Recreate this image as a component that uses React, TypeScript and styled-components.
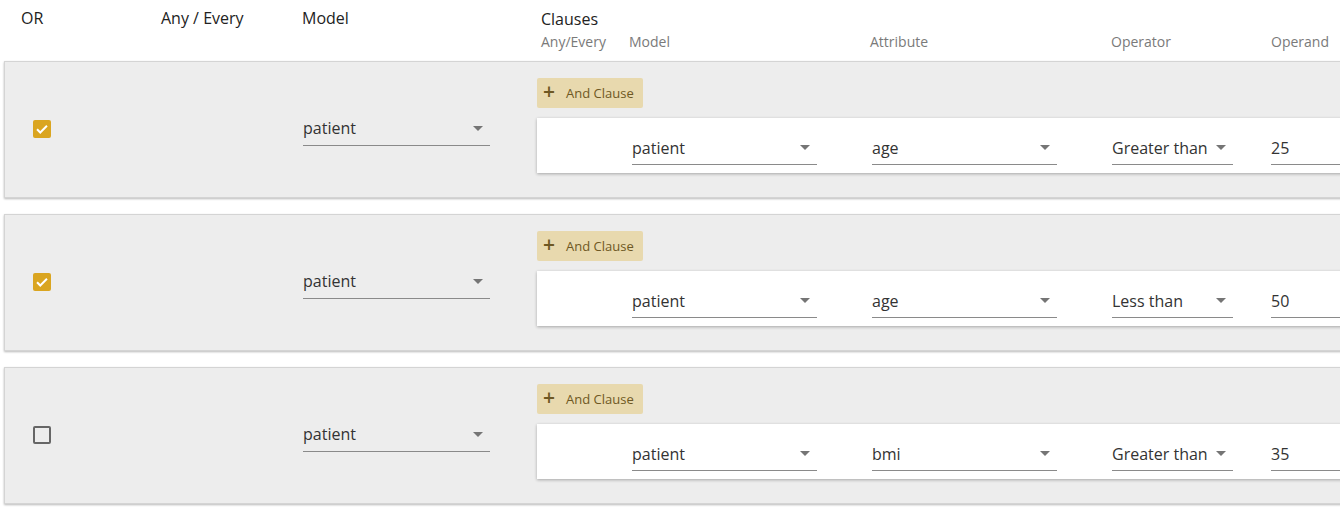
import styled, { createGlobalStyle } from 'styled-components'

const GlobalStyle = createGlobalStyle`
    body {
        margin: 0;
        font-family: "Open Sans", "Liberation Sans", sans-serif;
        background: #fff;
        overflow: hidden;
    }
`

const Page = styled.div`
    width: 1420px;
    padding: 0 4px;
`
const HeaderRow = styled.div`
    display: grid;
    grid-template-columns: 140px 141px 235px 1fr;
    padding: 7px 0 8px 17px;
    color: #222;
    font-size: 16px;
`
const HeaderCell = styled.div`
    line-height: 22px;
`
const ClausesHead = styled.div`
    padding-left: 4px;
    .title{
        line-height: 24px;
    }
`
const SubHeader = styled.div`
    display: grid;
    grid-template-columns: 88px 241px 241px 160px 1fr;
    font-size: 14px;
    line-height: 22px;
    color: #7a7a7a;
`
const Card = styled.div`
    display: grid;
    grid-template-columns: 140px 141px 235px 1fr;
    align-items: center;
    background: #ededed;
    border: 1px solid #d4d4d4;
    box-shadow: 0 1px 2px rgba(0, 0, 0, 0.28);
    padding: 16px 0 24px 16px;
    margin-bottom: 16px;
`
const Cell = styled.div<{ $indent?: number }>`
    padding-top: 7px;
    padding-left: ${props => props.$indent || 0}px;
`
const Checkbox = styled.div<{ $checked: boolean }>`
    width: 18px;
    height: 18px;
    margin-left: 12px;
    box-sizing: border-box;
    border-radius: 2px;
    display: flex;
    align-items: center;
    justify-content: center;
    background: ${props => props.$checked ? '#daa520' : 'transparent'};
    border: ${props => props.$checked ? 'none' : '2px solid #666'};
`
const Select = styled.div<{ $width: number }>`
    width: ${props => props.$width}px;
    height: 33px;
    box-sizing: border-box;
    display: flex;
    align-items: center;
    justify-content: space-between;
    border-bottom: 1px solid #8a8a8a;
    font-size: 16px;
    color: #333;
    padding-bottom: 1px;
`
const Arrow = styled.span`
    width: 0;
    height: 0;
    border-left: 5px solid transparent;
    border-right: 5px solid transparent;
    border-top: 5px solid #757575;
    margin-right: 7px;
`
const ClauseColumn = styled.div`
    display: flex;
    flex-direction: column;
    align-items: flex-start;
    gap: 10px;
`
const AddButton = styled.button`
    height: 30px;
    width: 106px;
    border: none;
    border-radius: 2px;
    background: #e8d9ae;
    color: #6e5823;
    font-family: inherit;
    font-size: 13px;
    display: flex;
    align-items: center;
    gap: 11px;
    padding: 0 6px;
    .plus{
        font-size: 21px;
        font-weight: 600;
        line-height: 1;
        margin-top: -3px;
    }
`
const ClauseCard = styled.div`
    align-self: stretch;
    display: grid;
    grid-template-columns: 95px 240px 240px 159px 1fr;
    background: #fff;
    box-shadow: 0 1px 3px rgba(0, 0, 0, 0.3);
    padding: 14px 0 8px 0;
`

const Check = () => (
    <svg width="14" height="14" viewBox="0 0 24 24">
        <path d="M3.5 12.5l5.5 5.5L20.5 6.5" fill="none" stroke="#fff" strokeWidth="3.4" />
    </svg>
)

const rows = [
    { checked: true, attribute: 'age', operator: 'Greater than', operand: '25' },
    { checked: true, attribute: 'age', operator: 'Less than', operand: '50' },
    { checked: false, attribute: 'bmi', operator: 'Greater than', operand: '35' },
]

const App = () => {
    return (
        <>
            <GlobalStyle />
            <Page>
                <HeaderRow>
                    <HeaderCell>OR</HeaderCell>
                    <HeaderCell>Any / Every</HeaderCell>
                    <HeaderCell>Model</HeaderCell>
                    <ClausesHead>
                        <div className='title'>Clauses</div>
                        <SubHeader>
                            <div>Any/Every</div>
                            <div>Model</div>
                            <div>Attribute</div>
                            <div>Operator</div>
                            <div>Operand</div>
                        </SubHeader>
                    </ClausesHead>
                </HeaderRow>
                {rows.map((row, i) => (
                    <Card key={i}>
                        <Cell>
                            <Checkbox $checked={row.checked}>{row.checked && <Check />}</Checkbox>
                        </Cell>
                        <Cell></Cell>
                        <Cell $indent={1}>
                            <Select $width={187}>patient<Arrow /></Select>
                        </Cell>
                        <ClauseColumn>
                            <AddButton><span className='plus'>+</span>And Clause</AddButton>
                            <ClauseCard>
                                <div></div>
                                <Select $width={185}>patient<Arrow /></Select>
                                <Select $width={185}>{row.attribute}<Arrow /></Select>
                                <Select $width={121}>{row.operator}<Arrow /></Select>
                                <Select $width={140}>{row.operand}</Select>
                            </ClauseCard>
                        </ClauseColumn>
                    </Card>
                ))}
            </Page>
        </>
    )
}

export default App
